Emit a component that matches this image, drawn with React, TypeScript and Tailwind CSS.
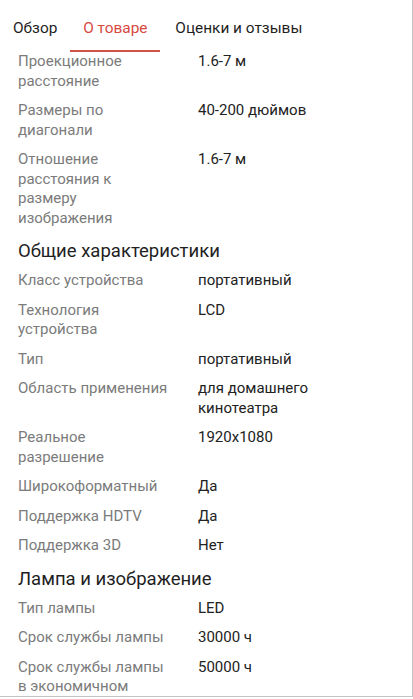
const font = { fontFamily: "Roboto, 'Noto Sans', sans-serif" };

type Row = { label: string; value: string };

const top: Row[] = [
  { label: "Проекционное расстояние", value: "1.6-7 м" },
  { label: "Размеры по диагонали", value: "40-200 дюймов" },
  { label: "Отношение расстояния к размеру изображения", value: "1.6-7 м" },
];

const general: Row[] = [
  { label: "Класс устройства", value: "портативный" },
  { label: "Технология устройства", value: "LCD" },
  { label: "Тип", value: "портативный" },
  { label: "Область применения", value: "для домашнего кинотеатра" },
  { label: "Реальное разрешение", value: "1920x1080" },
  { label: "Широкоформатный", value: "Да" },
  { label: "Поддержка HDTV", value: "Да" },
  { label: "Поддержка 3D", value: "Нет" },
];

const lamp: Row[] = [
  { label: "Тип лампы", value: "LED" },
  { label: "Срок службы лампы", value: "30000 ч" },
  { label: "Срок службы лампы в экономичном режиме", value: "50000 ч" },
];

function SpecRow({ label, value }: Row) {
  return (
    <div className="flex py-[5px] text-[15px] leading-[19.5px]">
      <div className="w-[154px] shrink-0 text-[#7b7b7b]">{label}</div>
      <div className="ml-[26px] w-[180px] text-[#222]">{value}</div>
    </div>
  );
}

function Heading({ children }: { children: string }) {
  return (
    <div className="mt-[6px] mb-[3px] text-[18.5px] leading-[24px] text-[#1f1f1f]">
      {children}
    </div>
  );
}

export default function App() {
  return (
    <div
      style={font}
      className="h-[699px] w-[413px] overflow-hidden bg-white"
    >
      <div className="h-[697px] w-[413px] overflow-hidden border-r border-b border-[#c4c4c4] bg-white">
        {/* вкладки */}
        <div className="relative z-10 flex h-[52px] items-start bg-white text-[15.4px] leading-[20px]">
          <div className="px-[13px] pt-[18px] text-[#1f1f1f]">Обзор</div>
          <div className="flex h-[52px] w-[90px] flex-col items-center justify-between pt-[18px]">
            <span className="text-[#d8493f]">О товаре</span>
            <div className="h-[2px] w-full bg-[#cf5445]" />
          </div>
          <div className="pl-[15px] pt-[18px] text-[#1f1f1f]">Оценки и отзывы</div>
        </div>

        {/* характеристики */}
        <div className="-mt-[5px] px-[18px]">
          {top.map((r) => (
            <SpecRow key={r.label} {...r} />
          ))}
          <Heading>Общие характеристики</Heading>
          {general.map((r) => (
            <SpecRow key={r.label} {...r} />
          ))}
          <Heading>Лампа и изображение</Heading>
          {lamp.map((r) => (
            <SpecRow key={r.label + r.value} {...r} />
          ))}
        </div>
      </div>
    </div>
  );
}
